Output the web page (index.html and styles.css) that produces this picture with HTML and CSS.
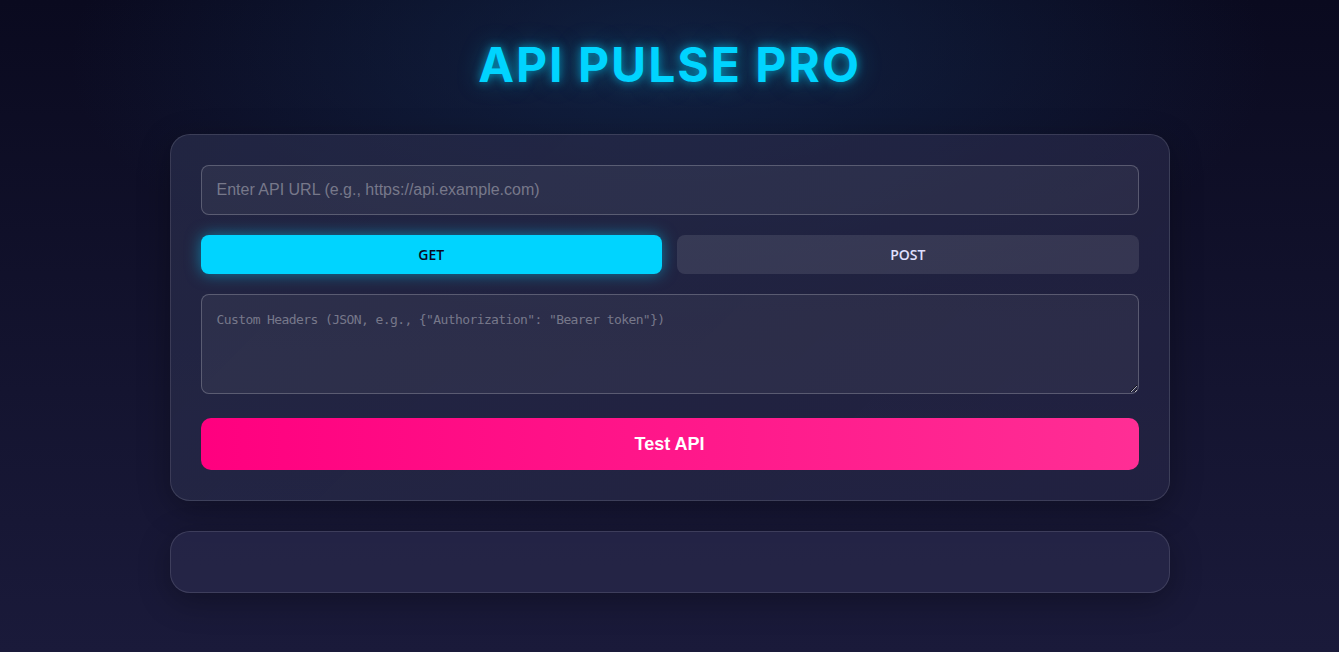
FILE: index.html
```html
<!DOCTYPE html>
<html lang="en">
<head>
<meta charset="utf-8">
<title>API Pulse Pro</title>
<link rel="stylesheet" href="styles.css">
</head>
<body>
<div class="page">
  <h1 class="title">API PULSE PRO</h1>
  <div class="card">
    <input class="url-input" type="text" placeholder="Enter API URL (e.g., https://api.example.com)">
    <div class="methods">
      <button class="method active">GET</button>
      <button class="method">POST</button>
    </div>
    <textarea class="headers" placeholder='Custom Headers (JSON, e.g., {"Authorization": "Bearer token"})'></textarea>
    <button class="test-btn">Test API</button>
  </div>
  <div class="card result"></div>
</div>
</body>
</html>
```
FILE: styles.css
```css
* { box-sizing: border-box; }
html, body { height: 100%; }
body {
  margin: 0;
  font-family: "Liberation Sans", Arial, sans-serif;
  background:
    radial-gradient(ellipse 600px 260px at 50% 60px, rgba(20, 50, 90, 0.55), rgba(20, 50, 90, 0) 100%),
    linear-gradient(180deg, #0a0a1f 0%, #141430 60%, #1a1a3a 100%);
  color: #e0e0ff;
  overflow: hidden;
}
.page {
  max-width: 1000px;
  margin: 0 auto;
  padding-top: 34px;
}
.title {
  margin: 0 0 38px;
  text-align: center;
  font-family: Inter, "Noto Sans", sans-serif;
  font-weight: 700;
  font-size: 48px;
  letter-spacing: 2px;
  line-height: 62px;
  color: #00d4ff;
  text-shadow: 0 0 10px rgba(0, 212, 255, 0.6), 0 0 24px rgba(0, 212, 255, 0.35);
}
.card {
  background: linear-gradient(135deg, rgba(40, 44, 74, 0.75), rgba(38, 38, 70, 0.7));
  border: 1px solid rgba(255, 255, 255, 0.12);
  border-radius: 20px;
  padding: 30px;
  box-shadow: 0 8px 32px rgba(0, 0, 0, 0.3);
}
.url-input {
  display: block;
  width: 100%;
  height: 50px;
  padding: 0 15px;
  border: 1px solid rgba(255, 255, 255, 0.22);
  border-radius: 8px;
  background: rgba(255, 255, 255, 0.05);
  color: #e0e0ff;
  font-family: "Liberation Sans", Arial, sans-serif;
  font-size: 16px;
  outline: none;
}
.url-input::placeholder { color: #77788a; }
.methods {
  display: flex;
  gap: 15px;
  margin-top: 20px;
}
.method {
  flex: 1;
  height: 39px;
  padding: 0 0 1px;
  border: none;
  border-radius: 8px;
  background: rgba(255, 255, 255, 0.1);
  color: #e0e0ff;
  font-family: "Open Sans", "Noto Sans", sans-serif;
  font-weight: 600;
  font-size: 14px;
  cursor: pointer;
}
.method.active {
  background: #00d4ff;
  color: #0a0a1f;
  box-shadow: 0 0 15px rgba(0, 212, 255, 0.5);
}
.headers {
  display: block;
  width: 100%;
  height: 100px;
  margin-top: 20px;
  padding: 17px 15px 15px;
  border: 1px solid rgba(255, 255, 255, 0.22);
  border-radius: 8px;
  background: rgba(255, 255, 255, 0.05);
  color: #e0e0ff;
  font-family: "DejaVu Sans Mono", monospace;
  font-size: 13px;
  letter-spacing: -0.6px;
  resize: vertical;
  outline: none;
}
.headers::placeholder { color: #77788a; }
.test-btn {
  display: block;
  width: 100%;
  height: 52px;
  margin-top: 24px;
  border: none;
  border-radius: 10px;
  background: linear-gradient(90deg, #ff007f, #ff2e95);
  color: #ffffff;
  font-family: "Liberation Sans", Arial, sans-serif;
  font-weight: 700;
  font-size: 18px;
  cursor: pointer;
}
.result {
  margin-top: 30px;
  height: 62px;
  padding: 0;
  background: rgba(40, 40, 75, 0.75);
}
```
